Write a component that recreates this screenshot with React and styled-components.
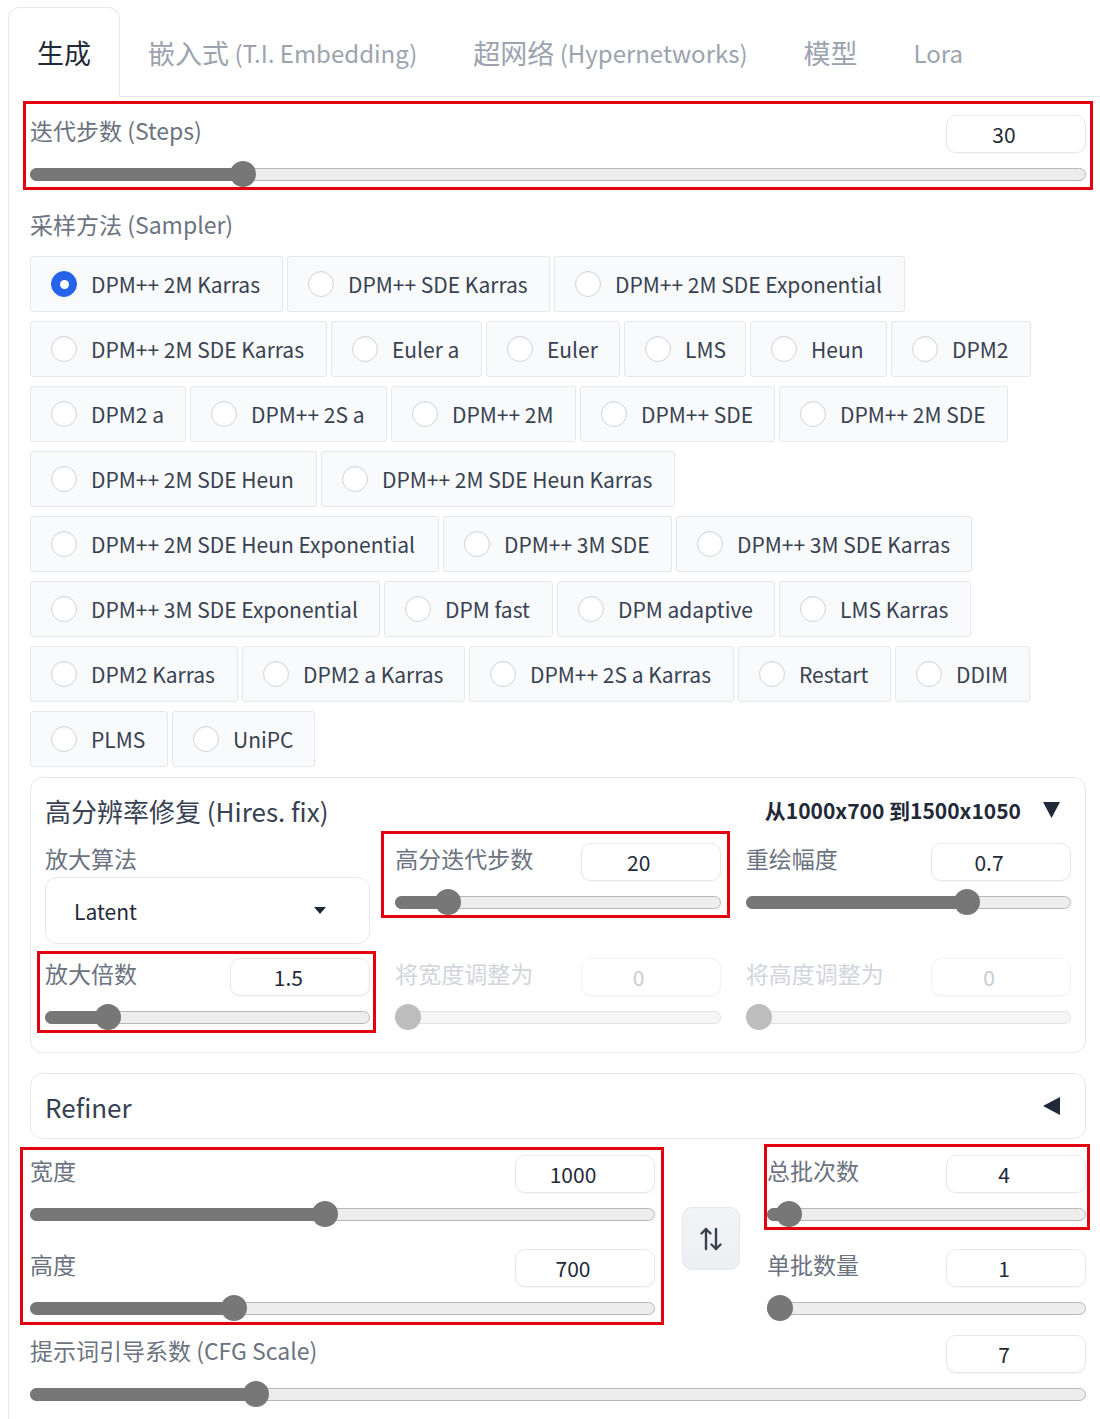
import styled, { createGlobalStyle } from "styled-components";

const GlobalStyle = createGlobalStyle`
    body {
        margin: 0;
        background: #ffffff;
        font-family: "Noto Sans CJK SC", "Noto Sans", sans-serif;
        color: #374151;
    }
`

const Page = styled.div`
    padding-left: 8px;
    width: 1100px;
    box-sizing: border-box;
`

const TabBar = styled.div`
    display: flex;
    align-items: flex-start;
    padding-top: 7px;
    border-bottom: 1px solid #e5e7eb;
`

const Tab = styled.div`
    height: ${p => (p.$active ? 90 : 89)}px;
    box-sizing: border-box;
    padding: 0 ${p => (p.$active ? 28 : 27)}px;
    display: flex;
    align-items: center;
    font-size: 27px;
    white-space: pre;
    color: ${p => (p.$active ? "#1f2937" : "#9ca3af")};
    border: 1px solid ${p => (p.$active ? "#e5e7eb" : "transparent")};
    border-bottom: none;
    border-radius: 12px 12px 0 0;
    background: ${p => (p.$active ? "#ffffff" : "transparent")};
    margin-bottom: ${p => (p.$active ? -1 : 0)}px;
`

const TabLatin = styled.span`
    font-size: 24px;
`

const Panel = styled.div`
    border-left: 1px solid #e5e7eb;
    padding: 18px 14px 20px 21px;
`

const Marked = styled.div`
    position: relative;

    &::after {
        content: "";
        position: absolute;
        top: ${p => p.$t}px;
        right: ${p => p.$r}px;
        bottom: ${p => p.$b}px;
        left: ${p => p.$l}px;
        border: 3px solid #e3000f;
        pointer-events: none;
    }
`

const Field = styled.div`
    display: flex;
    flex-direction: column;
`

const FieldHead = styled.div`
    display: flex;
    justify-content: space-between;
    align-items: flex-start;
    height: 38px;
`

const Label = styled.span`
    font-size: 23px;
    line-height: 30px;
    color: ${p => (p.$disabled ? "#d1d5db" : "#6b7280")};
    white-space: nowrap;
`

const NumberBox = styled.div`
    width: 140px;
    height: 38px;
    box-sizing: border-box;
    padding-right: 24px;
    border: 1px solid ${p => (p.$disabled ? "#f1f2f4" : "#e5e7eb")};
    border-radius: 10px;
    display: flex;
    align-items: center;
    justify-content: center;
    font-size: 21px;
    color: ${p => (p.$disabled ? "#c8ccd2" : "#1f2937")};
    box-shadow: 0 1px 2px rgba(0, 0, 0, 0.04);
`

const SliderBox = styled.div`
    height: 28px;
    margin-top: 7px;
    display: flex;
    align-items: center;
`

const Track = styled.div`
    position: relative;
    flex: 1;
    height: 13px;
    box-sizing: border-box;
    border-radius: 7px;
    background: ${p => (p.$disabled ? "#f5f5f5" : "#ededed")};
    border: 1px solid ${p => (p.$disabled ? "#e2e2e2" : "#b8b8b8")};
`

const Fill = styled.div`
    position: absolute;
    left: -1px;
    top: -1px;
    bottom: -1px;
    border-radius: 7px;
    background: #777777;
`

const Thumb = styled.div`
    position: absolute;
    top: 50%;
    width: 26px;
    height: 26px;
    margin-top: -13px;
    margin-left: -1px;
    border-radius: 50%;
    background: ${p => (p.$disabled ? "#bdbdbd" : "#777777")};
`

const SectionLabel = styled.div`
    font-size: 23px;
    line-height: 30px;
    color: #6b7280;
    margin-top: 21px;
`

const RadioRows = styled.div`
    display: flex;
    flex-direction: column;
    gap: 9px;
    margin-top: 17px;
`

const RadioRow = styled.div`
    display: flex;
    gap: 4px;
`

const RadioItem = styled.div`
    width: ${p => p.$w}px;
    height: 56px;
    box-sizing: border-box;
    padding: 0 20px;
    display: flex;
    align-items: center;
    gap: 14px;
    background: #f9fafb;
    border: 1px solid #e5e7eb;
    border-radius: 3px;
    font-size: 21px;
    color: #374151;
    white-space: nowrap;
`

const RadioDot = styled.span`
    width: 26px;
    height: 26px;
    flex-shrink: 0;
    box-sizing: border-box;
    border-radius: 50%;
    border: 1px solid ${p => (p.$on ? "#2563eb" : "#d1d5db")};
    background: ${p => (p.$on ? "#2563eb" : "#ffffff")};
    box-shadow: inset 0 1px 2px rgba(0, 0, 0, 0.05);
    display: flex;
    align-items: center;
    justify-content: center;

    &::after {
        content: "";
        display: ${p => (p.$on ? "block" : "none")};
        width: 9px;
        height: 9px;
        border-radius: 50%;
        background: #ffffff;
    }
`

const Accordion = styled.div`
    margin-top: ${p => p.$mt}px;
    border: 1px solid #e5e7eb;
    border-radius: 12px;
    padding: ${p => p.$pad};
`

const AccordionHead = styled.div`
    display: flex;
    justify-content: space-between;
    align-items: center;
    height: ${p => p.$h}px;
`

const AccordionTitle = styled.span`
    font-size: 26px;
    color: #374151;
`

const HeadRight = styled.div`
    display: flex;
    align-items: center;
    gap: 22px;
    padding-right: 11px;
    font-size: 21px;
    font-weight: 600;
    color: #1f2937;
`

const HiresGrid = styled.div`
    display: grid;
    grid-template-columns: repeat(3, 1fr);
    column-gap: 25px;
    row-gap: 14px;
    margin-top: 15px;
    align-items: start;
`

const Dropdown = styled.div`
    margin-top: 4px;
    height: 67px;
    box-sizing: border-box;
    border: 1px solid #e5e7eb;
    border-radius: 12px;
    padding: 0 43px 0 28px;
    display: flex;
    align-items: center;
    justify-content: space-between;
    font-size: 21px;
    color: #1f2937;
`

const DimsGrid = styled.div`
    display: grid;
    grid-template-columns: 625px 58px 1fr;
    column-gap: 27px;
    margin-top: 16px;
    align-items: center;
`

const Stack = styled.div`
    display: flex;
    flex-direction: column;
    gap: 21px;
`

const SwapButton = styled.button`
    width: 58px;
    height: 63px;
    border: 1px solid #e5e7eb;
    border-radius: 10px;
    background: linear-gradient(#f3f4f6, #eceef1);
    display: flex;
    align-items: center;
    justify-content: center;
    padding: 0;
`

const CfgWrap = styled.div`
    margin-top: 13px;
`

function Slider({ value, min, max, disabled }) {
    const f = (value - min) / (max - min)
    return (
        <SliderBox>
            <Track $disabled={disabled}>
                {!disabled && <Fill style={{ width: `calc(14px + ${f} * (100% - 26px))` }} />}
                <Thumb $disabled={disabled} style={{ left: `calc(${f} * (100% - 26px))` }} />
            </Track>
        </SliderBox>
    )
}

function SliderField({ label, value, min, max, disabled }) {
    return (
        <Field>
            <FieldHead>
                <Label $disabled={disabled}>{label}</Label>
                <NumberBox $disabled={disabled}>{value}</NumberBox>
            </FieldHead>
            <Slider value={value} min={min} max={max} disabled={disabled} />
        </Field>
    )
}

const samplerRows = [
    [["DPM++ 2M Karras", 253], ["DPM++ SDE Karras", 263], ["DPM++ 2M SDE Exponential", 351]],
    [["DPM++ 2M SDE Karras", 297], ["Euler a", 151], ["Euler", 134], ["LMS", 122], ["Heun", 137], ["DPM2", 140]],
    [["DPM2 a", 156], ["DPM++ 2S a", 197], ["DPM++ 2M", 185], ["DPM++ SDE", 195], ["DPM++ 2M SDE", 229]],
    [["DPM++ 2M SDE Heun", 287], ["DPM++ 2M SDE Heun Karras", 354]],
    [["DPM++ 2M SDE Heun Exponential", 409], ["DPM++ 3M SDE", 229], ["DPM++ 3M SDE Karras", 296]],
    [["DPM++ 3M SDE Exponential", 350], ["DPM fast", 169], ["DPM adaptive", 218], ["LMS Karras", 192]],
    [["DPM2 Karras", 208], ["DPM2 a Karras", 223], ["DPM++ 2S a Karras", 265], ["Restart", 153], ["DDIM", 135]],
    [["PLMS", 138], ["UniPC", 143]],
]

const tabs = [
    ["生成", ""],
    ["嵌入式", " (T.I. Embedding)"],
    ["超网络", " (Hypernetworks)"],
    ["模型", ""],
    ["", "Lora"],
]

function SwapIcon() {
    return (
        <svg width="24" height="26" viewBox="0 0 24 26" fill="none" stroke="#374151" strokeWidth="2.4" strokeLinecap="round" strokeLinejoin="round">
            <path d="M7 23V3" />
            <path d="M2.5 7.5 7 3l4.5 4.5" />
            <path d="M17 3v20" />
            <path d="M12.5 18.5 17 23l4.5-4.5" />
        </svg>
    )
}

export default function App() {
    return (
        <Page>
            <GlobalStyle />
            <TabBar>
                {tabs.map(([cjk, latin], i) => (
                    <Tab key={i} $active={i === 0}>
                        {cjk}
                        {latin && <TabLatin>{latin}</TabLatin>}
                    </Tab>
                ))}
            </TabBar>
            <Panel>
                <Marked $t={-14} $r={-7} $b={-2} $l={-7}>
                    <SliderField label="迭代步数 (Steps)" value={30} min={1} max={150} />
                </Marked>

                <SectionLabel>采样方法 (Sampler)</SectionLabel>
                <RadioRows>
                    {samplerRows.map((row, ri) => (
                        <RadioRow key={ri}>
                            {row.map(([name, w]) => (
                                <RadioItem key={name} $w={w}>
                                    <RadioDot $on={name === "DPM++ 2M Karras"} />
                                    {name}
                                </RadioItem>
                            ))}
                        </RadioRow>
                    ))}
                </RadioRows>

                <Accordion $mt={10} $pad="14px 14px 21px 14px">
                    <AccordionHead $h={36}>
                        <AccordionTitle>高分辨率修复 (Hires. fix)</AccordionTitle>
                        <HeadRight>
                            <span>从1000x700 到1500x1050</span>
                            <svg width="17" height="16" viewBox="0 0 17 16">
                                <path d="M0 0h17L8.5 16z" fill="#1f2937" />
                            </svg>
                        </HeadRight>
                    </AccordionHead>
                    <HiresGrid>
                        <Field>
                            <Label>放大算法</Label>
                            <Dropdown>
                                <span>Latent</span>
                                <svg width="12" height="7" viewBox="0 0 12 7">
                                    <path d="M0 0h12L6 7z" fill="#1f2937" />
                                </svg>
                            </Dropdown>
                        </Field>
                        <Marked $t={-12} $r={-9} $b={-2} $l={-14}>
                            <SliderField label="高分迭代步数" value={20} min={0} max={150} />
                        </Marked>
                        <SliderField label="重绘幅度" value={0.7} min={0} max={1} />
                        <Marked $t={-7} $r={-6} $b={-2} $l={-8}>
                            <SliderField label="放大倍数" value={1.5} min={1} max={4} />
                        </Marked>
                        <SliderField label="将宽度调整为" value={0} min={0} max={2048} disabled />
                        <SliderField label="将高度调整为" value={0} min={0} max={2048} disabled />
                    </HiresGrid>
                </Accordion>

                <Accordion $mt={20} $pad="0 14px">
                    <AccordionHead $h={64}>
                        <AccordionTitle>Refiner</AccordionTitle>
                        <HeadRight>
                            <svg width="17" height="18" viewBox="0 0 17 18">
                                <path d="M17 0v18L0 9z" fill="#1f2937" />
                            </svg>
                        </HeadRight>
                    </AccordionHead>
                </Accordion>

                <DimsGrid>
                    <Marked $t={-8} $r={-9} $b={-3} $l={-10}>
                        <Stack>
                            <SliderField label="宽度" value={1000} min={64} max={2048} />
                            <SliderField label="高度" value={700} min={64} max={2048} />
                        </Stack>
                    </Marked>
                    <SwapButton>
                        <SwapIcon />
                    </SwapButton>
                    <Stack>
                        <Marked $t={-11} $r={-4} $b={-2} $l={-3}>
                            <SliderField label="总批次数" value={4} min={1} max={100} />
                        </Marked>
                        <SliderField label="单批数量" value={1} min={1} max={8} />
                    </Stack>
                </DimsGrid>

                <CfgWrap>
                    <SliderField label="提示词引导系数 (CFG Scale)" value={7} min={1} max={30} />
                </CfgWrap>
            </Panel>
        </Page>
    )
}
